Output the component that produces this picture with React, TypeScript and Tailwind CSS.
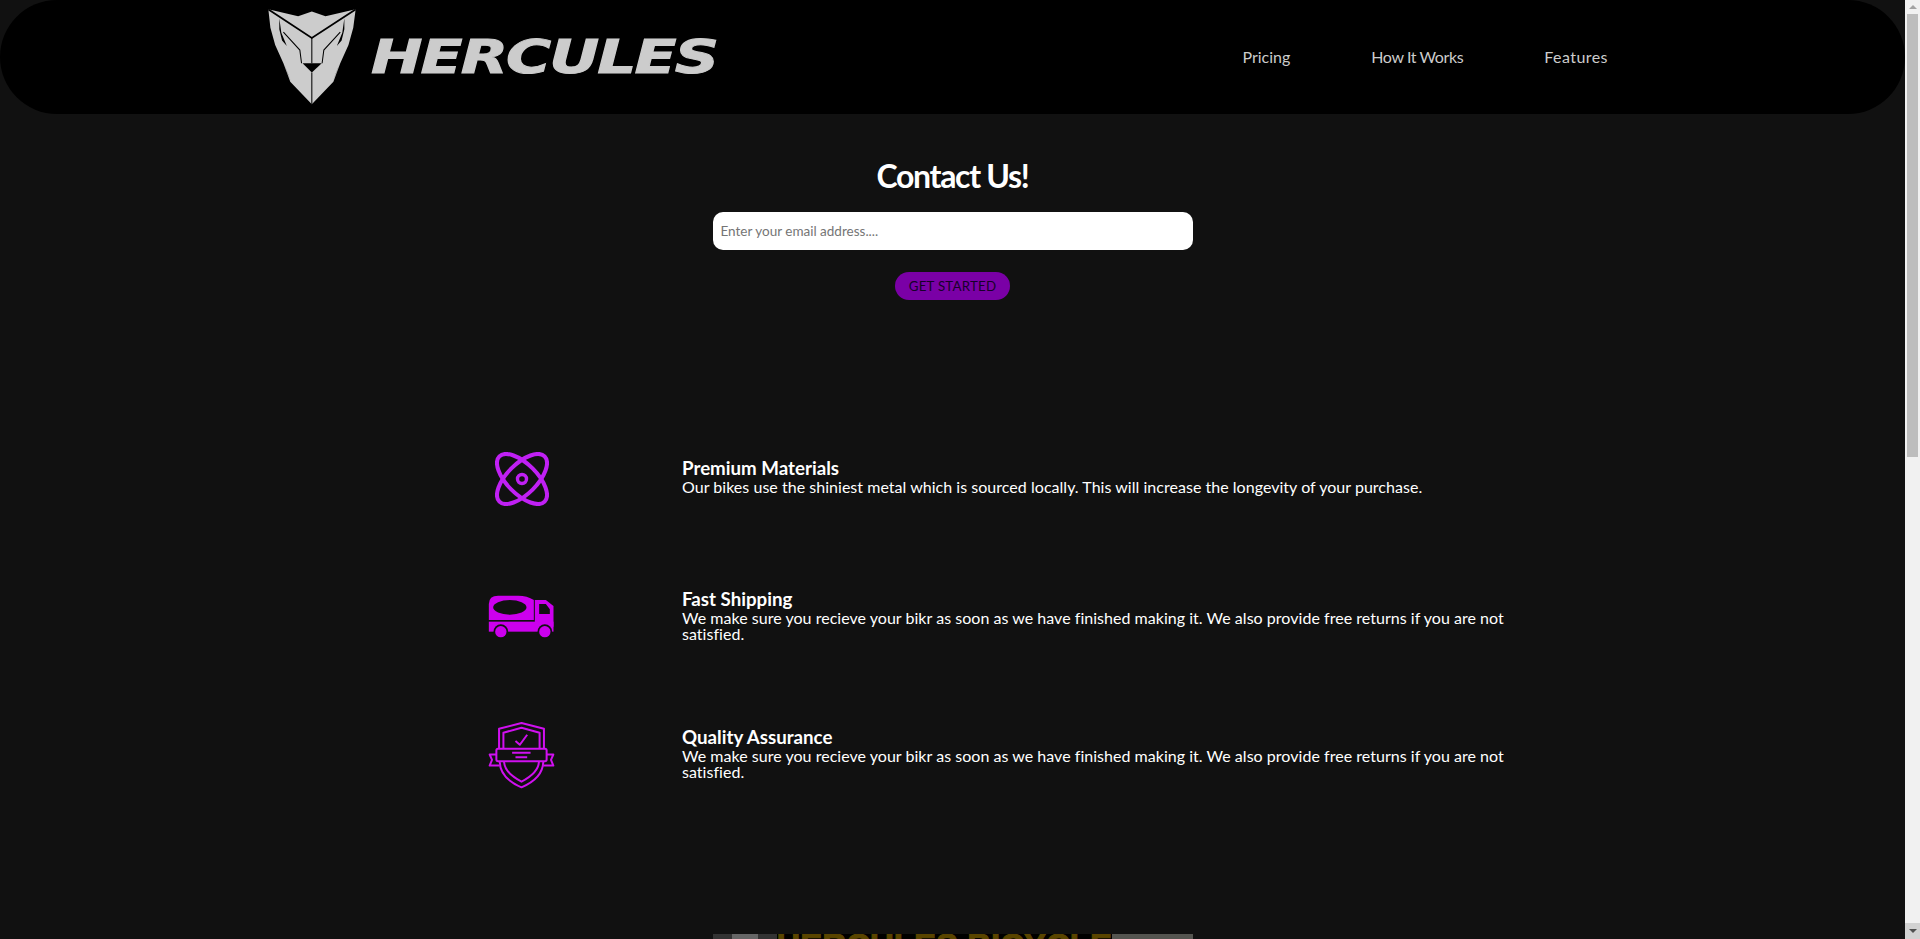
import React from 'react';

const font = { fontFamily: 'Lato, sans-serif' };

const LogoMark: React.FC = () => (
  <svg width="88" height="96" viewBox="27 21 257 278" preserveAspectRatio="none" className="shrink-0">
    <path
      d="M28 22 L115 42 L155 28 L195 42 L283 22 L276 75 L262 125 L238 178 L218 232 L155 297 L92 232 L72 178 L48 125 L34 75 Z"
      fill="#cccccc"
    />
    <path d="M28 22 L155 105 L283 22" fill="none" stroke="#000" strokeWidth="5" />
    <path d="M155 105 V178 M155 205 V297" fill="none" stroke="#000" strokeWidth="3" />
    <path d="M128 178 H184 L155 205 Z" fill="#000" />
    <path
      d="M72 88 L120 140 L125 178 M238 88 L190 140 L185 178"
      fill="none"
      stroke="#000"
      strokeWidth="3"
    />
    <path d="M60 48 L66 90 L82 128 L68 112 L60 80 Z M250 48 L244 90 L228 128 L242 112 L250 80 Z" fill="#000" />
    <path d="M74 180 L94 232 L84 205 Z M236 180 L216 232 L226 205 Z" fill="#000" />
  </svg>
);

const AtomIcon: React.FC = () => (
  <svg width="54" height="54" viewBox="0 0 54 54" fill="none" stroke="#c020f4" strokeWidth="4" className="translate-y-[1px]">
    <ellipse cx="27" cy="27" rx="32" ry="15" transform="rotate(45 27 27)" />
    <ellipse cx="27" cy="27" rx="32" ry="15" transform="rotate(-45 27 27)" />
    <circle cx="27" cy="27" r="4.5" strokeWidth="3.4" />
  </svg>
);

const TruckIcon: React.FC = () => (
  <svg width="67" height="44" viewBox="55 45 200 132">
    <path fillRule="evenodd" d="M57 120 V72 Q57 47 85 47 H145 Q172 47 192 60 V120 Z M70 82 A50 22 0 1 0 170 82 A50 22 0 1 0 70 82 Z" fill="#cc00ee" />
    <path fillRule="evenodd" d="M195 60 H228 L251 78 V140 H195 Z M208 72 V102 H240 V88 L228 72 Z" fill="#cc00ee" />
    <rect x="57" y="125" width="194" height="30" fill="#cc00ee" />
    <circle cx="93" cy="155" r="22" fill="#111111" />
    <circle cx="225" cy="155" r="22" fill="#111111" />
    <circle cx="93" cy="155" r="17" fill="#cc00ee" />
    <circle cx="225" cy="155" r="17" fill="#cc00ee" />
  </svg>
);

const ShieldIcon: React.FC = () => (
  <svg width="67" height="67" viewBox="55 35 200 200" fill="none" stroke="#d010f0" strokeWidth="6" strokeLinejoin="round">
    <path d="M88 115 V55 L155 38 L222 55 V115" />
    <path d="M101 115 V67 L155 52 L209 67 V115" />
    <rect x="80" y="115" width="150" height="37" rx="5" />
    <path d="M80 132 H60 L67 148 L60 165 H90" />
    <path d="M230 132 H250 L243 148 L250 165 H220" />
    <path d="M90 152 C90 190 120 215 155 230 C190 215 220 190 220 152" />
    <path d="M103 152 C103 182 130 200 155 213 C180 200 207 182 207 152" />
    <path d="M137 92 L150 103 L172 73" />
    <path d="M127 127 H182 M137 140 H172" />
  </svg>
);

const features = [
  {
    icon: <AtomIcon />,
    title: 'Premium Materials',
    text: 'Our bikes use the shiniest metal which is sourced locally. This will increase the longevity of your purchase.',
  },
  {
    icon: <TruckIcon />,
    title: 'Fast Shipping',
    text: 'We make sure you recieve your bikr as soon as we have finished making it. We also provide free returns if you are not satisfied.',
  },
  {
    icon: <ShieldIcon />,
    title: 'Quality Assurance',
    text: 'We make sure you recieve your bikr as soon as we have finished making it. We also provide free returns if you are not satisfied.',
  },
];

const Scrollbar: React.FC = () => (
  <div className="w-[15px] shrink-0 bg-[#f1f1f1] flex flex-col items-center">
    <div className="h-[14px] flex items-center justify-center">
      <div className="w-0 h-0 border-x-[4px] border-x-transparent border-b-[4px] border-b-[#a3a3a3]" />
    </div>
    <div className="w-[11px] h-[443px] bg-[#bdbdbd]" />
    <div className="flex-1" />
    <div className="w-full h-[16px] bg-[#d2d2d2] flex items-center justify-center">
      <div className="w-0 h-0 border-x-[4px] border-x-transparent border-t-[4px] border-t-[#505050]" />
    </div>
  </div>
);

const App: React.FC = () => {
  return (
    <div className="h-screen flex overflow-hidden bg-[#111111]" style={font}>
      <div className="flex-1 min-w-0">
        <header className="h-[114px] rounded-[57px] bg-black flex items-center pl-[268px] pr-[297px]">
          <LogoMark />
          <span className="ml-[15px] mb-[2px] inline-block origin-left scale-x-[1.31] font-['DejaVu_Sans'] italic font-bold text-[47px] tracking-[-1.5px] leading-none text-[#cccccc] [-webkit-text-stroke:1px_#cccccc]">
            HERCULES
          </span>
          <nav className="ml-auto flex gap-[81px] text-[16px] text-[#cccccc]">
            <a>Pricing</a>
            <a className="tracking-[-0.4px]">How It Works</a>
            <a className="tracking-[0.45px]">Features</a>
          </nav>
        </header>

        <section className="flex flex-col items-center pt-[42px]">
          <h1 className="text-[32px] leading-[40px] font-bold tracking-[-1.3px] text-white">Contact Us!</h1>
          <input
            className="mt-[16px] w-[480px] h-[38px] rounded-[10px] bg-white px-[8px] text-[13.5px] outline-none placeholder:text-[#757575]"
            style={font}
            placeholder="Enter your email address...."
          />
          <button className="mt-[22px] w-[115px] h-[28px] rounded-[14px] bg-[#7a00a6] pt-[1px] text-[13.33px] tracking-[0.2px] text-[#17002a]">
            GET STARTED
          </button>
        </section>

        <section className="mt-[109px] pl-[361px]">
          {features.map((f) => (
            <div key={f.title} className="h-[138.5px] flex items-center">
              <div className="w-[321px] flex justify-center">{f.icon}</div>
              <div className="w-[840px] pb-[3px] text-white">
                <h3 className="mb-[1px] text-[18.72px] leading-[20px] font-bold">{f.title}</h3>
                <p className="text-[16px] leading-[16px] tracking-[0.03px]">{f.text}</p>
              </div>
            </div>
          ))}
        </section>

        <div className="mt-[109px] mx-auto w-[480px] h-[270px] flex overflow-hidden bg-[#333333]">
          <div className="w-[19px] bg-[#333333]" />
          <div className="w-[26px] bg-[#666666]" />
          <div className="w-[19px] bg-[#333333]" />
          <div className="w-[335px] bg-black font-['Liberation_Sans'] font-bold text-[33px] leading-[24px] text-[#5a4500] whitespace-nowrap overflow-hidden [-webkit-text-stroke:1px_#5a4500]">
            HERCULES BICYCLE
          </div>
          <div className="flex-1 bg-[#555550]" />
        </div>
      </div>
      <Scrollbar />
    </div>
  );
};

export default App;
